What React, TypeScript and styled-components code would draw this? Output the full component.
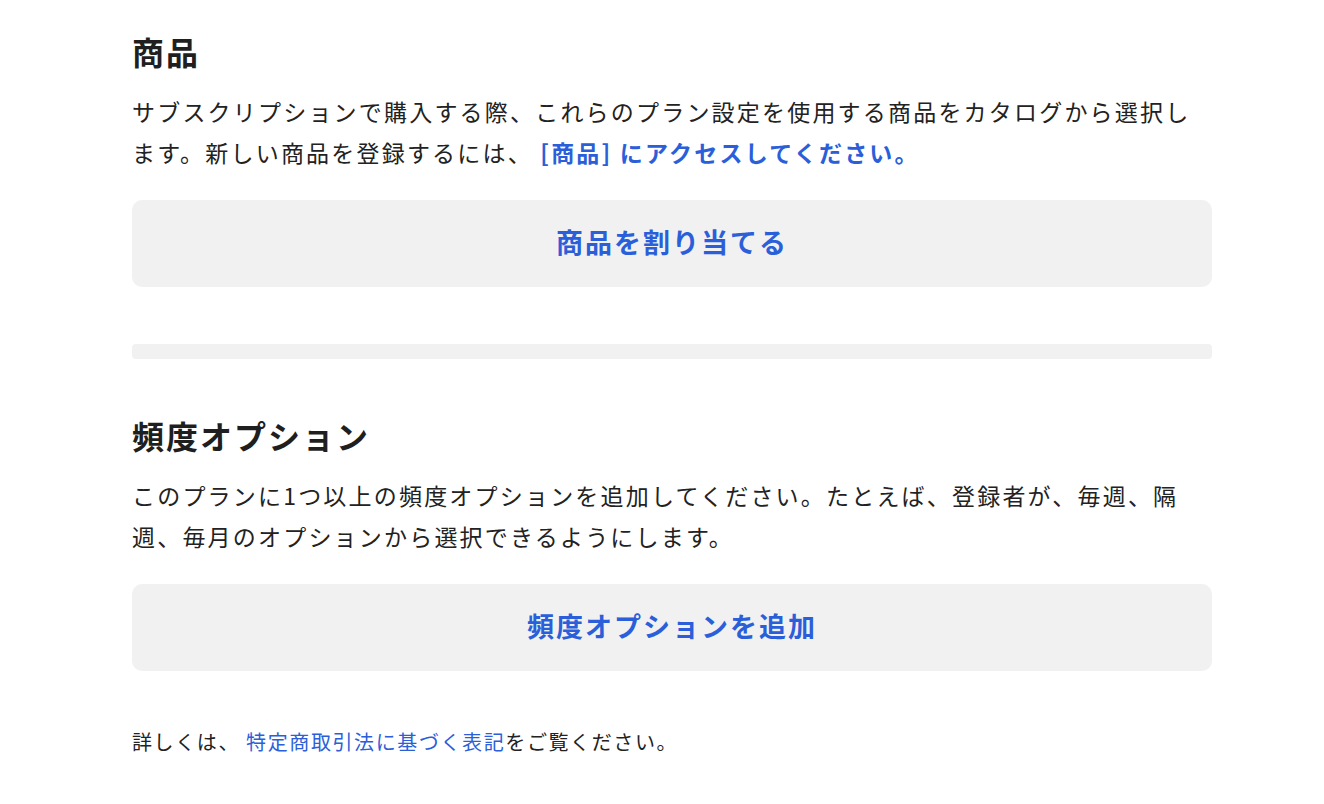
import React from "react";
import styled, { createGlobalStyle } from "styled-components";

const GlobalStyle = createGlobalStyle`
  html, body {
    margin: 0;
    padding: 0;
    background: #ffffff;
  }
  body {
    font-family: "Noto Sans CJK JP", "Noto Sans", sans-serif;
    color: #202020;
  }
`;

const Page = styled.main`
  width: 1080px;
  margin: 0 0 0 132px;
  padding: 28px 0 0 0;
  display: flex;
  flex-direction: column;
`;

const Section = styled.section`
  display: flex;
  flex-direction: column;
`;

const Heading = styled.h2`
  margin: 0;
  font-size: 32px;
  line-height: 46px;
  font-weight: 700;
  letter-spacing: 2px;
  color: #1f1f1f;
`;

const Paragraph = styled.p`
  margin: 17px 0 0 0;
  font-size: 23px;
  line-height: 41px;
  letter-spacing: 2.2px;
  color: #222222;
`;

const InlineLink = styled.a<{ $bold?: boolean }>`
  color: #2b5fd9;
  text-decoration: none;
  font-weight: ${(p) => (p.$bold ? 700 : 400)};
`;

const ActionButton = styled.button`
  margin-top: 27px;
  width: 100%;
  height: 87px;
  padding: 0 0 5px 0;
  border: none;
  border-radius: 10px;
  background: #f1f1f1;
  color: #2b5fd9;
  font-family: inherit;
  font-size: 27px;
  font-weight: 700;
  letter-spacing: 2px;
  cursor: pointer;
`;

const Divider = styled.hr`
  margin: 57px 0 53px 0;
  height: 15px;
  border: none;
  border-radius: 4px;
  background: #f1f1f1;
`;

const Footer = styled.p`
  margin: 55px 0 0 0;
  font-size: 20px;
  line-height: 32px;
  letter-spacing: 1.6px;
  color: #222222;
`;

export default function App() {
  return (
    <>
      <GlobalStyle />
      <Page>
        <Section>
          <Heading>商品</Heading>
          <Paragraph>
            サブスクリプションで購入する際、これらのプラン設定を使用する商品をカタログから選択します。新しい商品を登録するには、{" "}
            <InlineLink href="#" $bold>
              [商品] にアクセスしてください。
            </InlineLink>
          </Paragraph>
          <ActionButton type="button">商品を割り当てる</ActionButton>
        </Section>
        <Divider />
        <Section>
          <Heading>頻度オプション</Heading>
          <Paragraph>
            このプランに1つ以上の頻度オプションを追加してください。たとえば、登録者が、毎週、隔週、毎月のオプションから選択できるようにします。
          </Paragraph>
          <ActionButton type="button">頻度オプションを追加</ActionButton>
        </Section>
        <Footer>
          詳しくは、 <InlineLink href="#">特定商取引法に基づく表記</InlineLink>をご覧ください。
        </Footer>
      </Page>
    </>
  );
}
